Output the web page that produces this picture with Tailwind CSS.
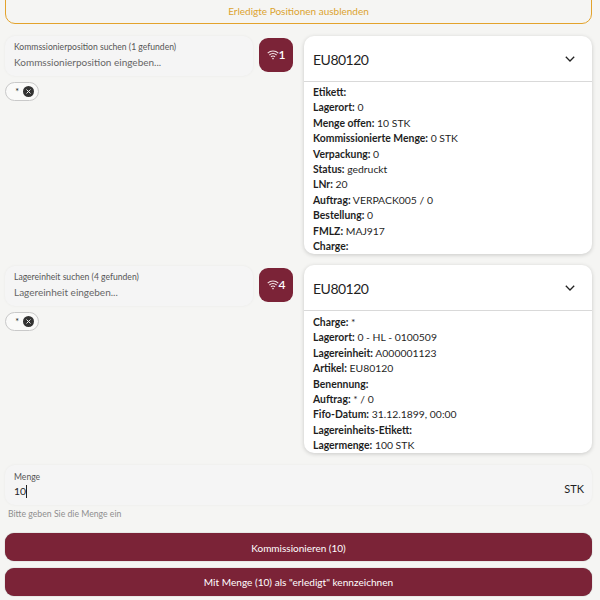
<!DOCTYPE html>
<html lang="de">
<head>
  <meta charset="UTF-8" />
  <title>Kommissionieren</title>
  <script src="https://cdn.jsdelivr.net/npm/@tailwindcss/browser@4"></script>
</head>
<body class="w-[600px] h-[600px] overflow-hidden bg-[#f5f5f3] font-['Lato',sans-serif] text-[#1f1f1f]">
  <div class="w-[597px] pl-[5px] pr-[5px] flex flex-col">

    <button class="h-[35px] -mt-[11px] w-full pt-[10px] text-[10px] text-[#dca32f] border-[1.5px] border-[#e3a32c] rounded-[10px]">Erledigte Positionen ausblenden</button>

    <div class="flex mt-[12px] h-[218px]">
      <div class="w-[288px] shrink-0">
        <div class="flex items-start">
          <div class="w-[248px] h-[40px] bg-[#f5f5f5] rounded-[10px] shadow-[0_0_3px_rgba(0,0,0,0.05)] pl-[9px] pt-[5px]">
            <div class="text-[8.6px] leading-[12px] text-[#555]">Kommssionierposition suchen (1 gefunden)</div>
            <div class="text-[10px] leading-[16px] mt-[1px] text-[#666]">Kommssionierposition eingeben...</div>
          </div>
          <div class="ml-[6px] mt-[2px] w-[34px] h-[34px] rounded-[9px] bg-[#7b2337] flex items-center justify-center text-white text-[12px] font-semibold">
            <svg width="12" height="10" viewBox="0 0 12 10" fill="none" stroke="#f3e3e6" stroke-width="1.1"><path d="M0.7 3.2a7.5 7.5 0 0 1 10.6 0M2.4 5a5 5 0 0 1 7.2 0M4 6.8a2.8 2.8 0 0 1 4 0"/><circle cx="6" cy="8.6" r="0.8" fill="#f3e3e6" stroke="none"/></svg>
            <span>1</span>
          </div>
        </div>
        <div class="mt-[6px] w-[34px] h-[19px] rounded-full border border-[#c9c9c9] bg-white/50 flex items-center justify-end pr-[4px] gap-[4px] text-[9px]">
          <span>*</span>
          <span class="w-[11px] h-[11px] rounded-full bg-[#333] flex items-center justify-center"><svg width="5" height="5" viewBox="0 0 5 5" stroke="#eee" stroke-width="1"><path d="M0.5 0.5l4 4M4.5 0.5l-4 4"/></svg></span>
        </div>
      </div>
      <div class="ml-[11px] w-[288px] h-[218px] bg-white rounded-[10px] shadow-[0_1px_4px_rgba(0,0,0,0.18)] overflow-hidden">
        <div class="h-[46px] border-b border-[#d9d9d9] flex items-center justify-between pl-[9px] pr-[17px] pt-[1px]">
          <span class="text-[14px] tracking-[-0.5px]">EU80120</span>
          <svg width="10" height="6" viewBox="0 0 10 6" fill="none" stroke="#222" stroke-width="1.3"><path d="M0.8 0.8L5 5l4.2-4.2"/></svg>
        </div>
        <div class="pl-[9px] pt-[3px] text-[10.4px] leading-[15.4px]">
          <div><b class="font-bold">Etikett:</b></div>
          <div><b class="font-bold">Lagerort:</b> 0</div>
          <div><b class="font-bold">Menge offen:</b> 10 STK</div>
          <div><b class="font-bold">Kommissionierte Menge:</b> 0 STK</div>
          <div><b class="font-bold">Verpackung:</b> 0</div>
          <div><b class="font-bold">Status:</b> gedruckt</div>
          <div><b class="font-bold">LNr:</b> 20</div>
          <div><b class="font-bold">Auftrag:</b> VERPACK005 / 0</div>
          <div><b class="font-bold">Bestellung:</b> 0</div>
          <div><b class="font-bold">FMLZ:</b> MAJ917</div>
          <div><b class="font-bold">Charge:</b></div>
        </div>
      </div>
    </div>

    <div class="flex mt-[11px] h-[188px]">
      <div class="w-[288px] shrink-0 pt-[1px]">
        <div class="flex items-start">
          <div class="w-[248px] h-[40px] bg-[#f5f5f5] rounded-[10px] shadow-[0_0_3px_rgba(0,0,0,0.05)] pl-[9px] pt-[5px]">
            <div class="text-[8.6px] leading-[12px] text-[#555]">Lagereinheit suchen (4 gefunden)</div>
            <div class="text-[10px] leading-[16px] mt-[1px] text-[#666]">Lagereinheit eingeben...</div>
          </div>
          <div class="ml-[6px] mt-[2px] w-[34px] h-[34px] rounded-[9px] bg-[#7b2337] flex items-center justify-center text-white text-[12px] font-semibold">
            <svg width="12" height="10" viewBox="0 0 12 10" fill="none" stroke="#f3e3e6" stroke-width="1.1"><path d="M0.7 3.2a7.5 7.5 0 0 1 10.6 0M2.4 5a5 5 0 0 1 7.2 0M4 6.8a2.8 2.8 0 0 1 4 0"/><circle cx="6" cy="8.6" r="0.8" fill="#f3e3e6" stroke="none"/></svg>
            <span>4</span>
          </div>
        </div>
        <div class="mt-[6px] w-[34px] h-[19px] rounded-full border border-[#c9c9c9] bg-white/50 flex items-center justify-end pr-[4px] gap-[4px] text-[9px]">
          <span>*</span>
          <span class="w-[11px] h-[11px] rounded-full bg-[#333] flex items-center justify-center"><svg width="5" height="5" viewBox="0 0 5 5" stroke="#eee" stroke-width="1"><path d="M0.5 0.5l4 4M4.5 0.5l-4 4"/></svg></span>
        </div>
      </div>
      <div class="ml-[11px] w-[288px] h-[188px] bg-white rounded-[10px] shadow-[0_1px_4px_rgba(0,0,0,0.18)] overflow-hidden">
        <div class="h-[46px] border-b border-[#d9d9d9] flex items-center justify-between pl-[9px] pr-[17px] pt-[1px]">
          <span class="text-[14px] tracking-[-0.5px]">EU80120</span>
          <svg width="10" height="6" viewBox="0 0 10 6" fill="none" stroke="#222" stroke-width="1.3"><path d="M0.8 0.8L5 5l4.2-4.2"/></svg>
        </div>
        <div class="pl-[9px] pt-[4px] text-[10.4px] leading-[15.4px]">
          <div><b class="font-bold">Charge:</b> *</div>
          <div><b class="font-bold">Lagerort:</b> 0 - HL - 0100509</div>
          <div><b class="font-bold">Lagereinheit:</b> A000001123</div>
          <div><b class="font-bold">Artikel:</b> EU80120</div>
          <div><b class="font-bold">Benennung:</b></div>
          <div><b class="font-bold">Auftrag:</b> * / 0</div>
          <div><b class="font-bold">Fifo-Datum:</b> 31.12.1899, 00:00</div>
          <div><b class="font-bold">Lagereinheits-Etikett:</b></div>
          <div><b class="font-bold">Lagermenge:</b> 100 STK</div>
        </div>
      </div>
    </div>

    <div class="mt-[12px] h-[40px] rounded-[10px] bg-[#f5f5f5] shadow-[0_0_3px_rgba(0,0,0,0.05)] pl-[9px] pr-[8px] pt-[6px] flex justify-between">
      <div>
        <div class="text-[8.6px] leading-[12px] text-[#555]">Menge</div>
        <div class="text-[10.4px] leading-[16px] flex items-center">10<span class="w-px h-[13px] bg-[#222]"></span></div>
      </div>
      <div class="text-[11px] pt-[10px] leading-[16px]">STK</div>
    </div>
    <div class="pl-[3px] mt-[2px] text-[8.7px] leading-[14px] text-[#8f8f8f]">Bitte geben Sie die Menge ein</div>

    <button class="mt-[12px] h-[28px] pt-[2px] w-full rounded-[9px] bg-[#7b2337] text-white text-[10px] shadow-[0_0_1px_rgba(0,0,0,0.5)]">Kommissionieren (10)</button>
    <button class="mt-[7px] h-[28px] pt-[1px] w-full rounded-[9px] bg-[#7b2337] text-white text-[10.1px] shadow-[0_0_1px_rgba(0,0,0,0.5)]">Mit Menge (10) als "erledigt" kennzeichnen</button>
  </div>
</body>
</html>
